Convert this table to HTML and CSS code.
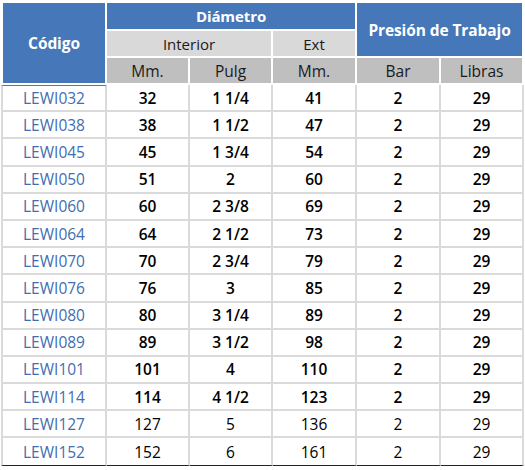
FILE: index.html
```html
<!DOCTYPE html>
<html lang="es">
<head>
    <meta charset="UTF-8">
    <title>Mangueras LEWI - Medidas</title>
    <link rel="stylesheet" href="styles.css">
</head>
<body>
    <table class="specs">
        <colgroup>
            <col class="c-code">
            <col class="c-mm">
            <col class="c-pulg">
            <col class="c-ext">
            <col class="c-bar">
            <col class="c-lib">
        </colgroup>
        <thead>
            <tr class="h1">
                <th rowspan="3" class="blue first big">Código</th>
                <th colspan="3" class="blue">Diámetro</th>
                <th colspan="2" rowspan="2" class="blue big">Presión de Trabajo</th>
            </tr>
            <tr class="h2">
                <th colspan="2" class="light">Interior</th>
                <th class="light">Ext</th>
            </tr>
            <tr class="h3">
                <th class="mid">Mm.</th>
                <th class="mid">Pulg</th>
                <th class="mid">Mm.</th>
                <th class="mid">Bar</th>
                <th class="mid">Libras</th>
            </tr>
        </thead>
        <tbody>
            <tr><td class="code">LEWI032</td><td>32</td><td>1 1/4</td><td>41</td><td>2</td><td>29</td></tr>
            <tr><td class="code">LEWI038</td><td>38</td><td>1 1/2</td><td>47</td><td>2</td><td>29</td></tr>
            <tr><td class="code">LEWI045</td><td>45</td><td>1 3/4</td><td>54</td><td>2</td><td>29</td></tr>
            <tr><td class="code">LEWI050</td><td>51</td><td>2</td><td>60</td><td>2</td><td>29</td></tr>
            <tr><td class="code">LEWI060</td><td>60</td><td>2 3/8</td><td>69</td><td>2</td><td>29</td></tr>
            <tr><td class="code">LEWI064</td><td>64</td><td>2 1/2</td><td>73</td><td>2</td><td>29</td></tr>
            <tr><td class="code">LEWI070</td><td>70</td><td>2 3/4</td><td>79</td><td>2</td><td>29</td></tr>
            <tr><td class="code">LEWI076</td><td>76</td><td>3</td><td>85</td><td>2</td><td>29</td></tr>
            <tr><td class="code">LEWI080</td><td>80</td><td>3 1/4</td><td>89</td><td>2</td><td>29</td></tr>
            <tr><td class="code">LEWI089</td><td>89</td><td>3 1/2</td><td>98</td><td>2</td><td>29</td></tr>
            <tr><td class="code">LEWI101</td><td>101</td><td>4</td><td>110</td><td>2</td><td>29</td></tr>
            <tr><td class="code">LEWI114</td><td>114</td><td>4 1/2</td><td>123</td><td>2</td><td>29</td></tr>
            <tr class="thin"><td class="code">LEWI127</td><td>127</td><td>5</td><td>136</td><td>2</td><td>29</td></tr>
            <tr class="thin last"><td class="code">LEWI152</td><td>152</td><td>6</td><td>161</td><td>2</td><td>29</td></tr>
        </tbody>
    </table>
</body>
</html>
```

FILE: styles.css
```css
body {
    margin: 0;
    padding: 3px 0 0 1px;
    background: #fff;
    font-family: "Open Sans", "Noto Sans", sans-serif;
}
.specs {
    border-collapse: separate;
    border-spacing: 0;
    table-layout: fixed;
    width: 523px;
}
.c-code { width: 106px; }
.c-mm { width: 83px; }
.c-pulg { width: 83px; }
.c-ext { width: 84px; }
.c-bar { width: 84px; }
.c-lib { width: 83px; }

.specs th,
.specs td {
    padding: 0;
    text-align: center;
    box-sizing: border-box;
}
.specs th {
    border-right: 2px solid #fff;
    border-bottom: 2px solid #fff;
    font-weight: 400;
    font-size: 15px;
    color: #1a1a1a;
}
.specs th.first { border-left: 2px solid #fff; }

.h1 th { height: 28px; }
.h2 th { height: 27px; }
.h3 th { height: 27px; font-size: 15.5px; }

.blue {
    background: #4677b9;
}
.specs th.blue {
    color: #fff;
    font-weight: 700;
    font-size: 15px;
    letter-spacing: -0.1px;
}
.specs th.big { font-size: 15.5px; }
.light { background: #d9d9d9; }
.mid { background: #bfbfbf; }

.specs td {
    height: 27.2px;
    border-right: 2px solid #dadada;
    border-bottom: 2px solid #dadada;
    font-size: 15.5px;
    font-weight: 600;
    color: #000;
}
.specs td:first-child { border-left: 2px solid #dadada; }
.specs tbody tr:first-child td.code { border-top: 1px solid #4677b9; }
.specs td.code {
    color: #3f6eb2;
    font-weight: 400;
    font-size: 15.5px;
}
.thin td { font-weight: 400; }
.last td { border-bottom: 1px solid #222; }
```
